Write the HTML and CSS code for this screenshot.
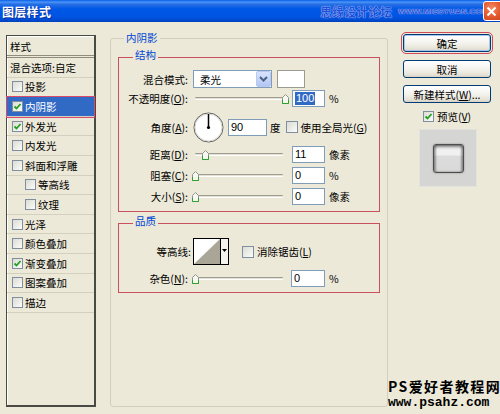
FILE: index.html
```html
<!DOCTYPE html>
<html lang="en">
<head>
<meta charset="utf-8">
<title>图层样式</title>
<link rel="stylesheet" href="styles.css">
</head>
<body>
<div class="titlebar">
  <span class="title">图层样式</span>
  <span class="tb-wm"><span class="wm-cn">思缘设计论坛</span><span class="wm-en">WWW.MISSYUAN.COM</span></span>
  <span class="close"><svg width="11" height="11" viewBox="0 0 11 11"><path d="M1.5 1.5 L9.5 9.5 M9.5 1.5 L1.5 9.5" stroke="#fff" stroke-width="2"/></svg></span>
</div>

<div class="dialog">
  <div class="list">
    <div class="list-head">样式</div>
    <div class="row plain">混合选项:自定</div>
    <div class="row"><span class="cb"></span>投影</div>
    <div class="row selected"><span class="cb"><svg width="9" height="9" viewBox="0 0 9 9"><path d="M1.5 4.5 L3.5 6.5 L7.5 2" stroke="#21a121" stroke-width="1.8" fill="none"/></svg></span>内阴影</div>
    <div class="row"><span class="cb"><svg width="9" height="9" viewBox="0 0 9 9"><path d="M1.5 4.5 L3.5 6.5 L7.5 2" stroke="#21a121" stroke-width="1.8" fill="none"/></svg></span>外发光</div>
    <div class="row"><span class="cb"></span>内发光</div>
    <div class="row"><span class="cb"></span>斜面和浮雕</div>
    <div class="row sub"><span class="cb"></span>等高线</div>
    <div class="row sub"><span class="cb"></span>纹理</div>
    <div class="row"><span class="cb"></span>光泽</div>
    <div class="row"><span class="cb"></span>颜色叠加</div>
    <div class="row"><span class="cb"><svg width="9" height="9" viewBox="0 0 9 9"><path d="M1.5 4.5 L3.5 6.5 L7.5 2" stroke="#21a121" stroke-width="1.8" fill="none"/></svg></span>渐变叠加</div>
    <div class="row"><span class="cb"></span>图案叠加</div>
    <div class="row"><span class="cb"></span>描边</div>
  </div>

  <div class="main">
    <div class="legend">内阴影</div>

    <div class="group struct">
      <div class="legend inner">结构</div>
      <div class="frow r-blend">
        <span class="lbl">混合模式:</span>
        <span class="select"><span class="sel-text">柔光</span><span class="sel-btn"><svg width="9" height="6" viewBox="0 0 9 6"><path d="M1 1 L4.5 4.5 L8 1" stroke="#4d6185" stroke-width="2" fill="none"/></svg></span></span>
        <span class="swatch"></span>
      </div>
      <div class="frow r-op">
        <span class="lbl">不透明度(<u>O</u>):</span>
        <span class="slider"><span class="track"></span><span class="thumb" style="left:89px"><svg width="7" height="10" viewBox="0 0 7 10"><path d="M0.5 3.5 L3.5 0.5 L6.5 3.5 V9.5 H0.5 Z" fill="#f7f7f2" stroke="#8b958b"/><path d="M0.5 6 V9.5 H6.5 V6" stroke="#2ea12e" fill="none"/></svg></span></span>
        <span class="input"><span class="hl">100</span></span>
        <span class="unit">%</span>
      </div>
      <div class="frow r-angle">
        <span class="lbl">角度(<u>A</u>):</span>
        <svg class="dial" width="31" height="31" viewBox="0 0 31 31"><circle cx="15.5" cy="15.5" r="14.5" fill="#fff" stroke="#5a5a5a"/><circle cx="15.5" cy="15.5" r="13.5" fill="none" stroke="#d8d8d0"/><path d="M15.5 15.5 V2" stroke="#000" stroke-width="1.5"/><circle cx="15.5" cy="15.5" r="1.6" fill="#000"/></svg>
        <span class="input ang">90</span>
        <span class="unit deg">度</span>
        <span class="cb gcb"></span>
        <span class="cb-lbl">使用全局光(<u>G</u>)</span>
      </div>
      <div class="frow r-s">
        <span class="lbl">距离(<u>D</u>):</span>
        <span class="slider"><span class="track"></span><span class="thumb" style="left:9px"><svg width="7" height="10" viewBox="0 0 7 10"><path d="M0.5 3.5 L3.5 0.5 L6.5 3.5 V9.5 H0.5 Z" fill="#f7f7f2" stroke="#8b958b"/><path d="M0.5 6 V9.5 H6.5 V6" stroke="#2ea12e" fill="none"/></svg></span></span>
        <span class="input">11</span>
        <span class="unit">像素</span>
      </div>
      <div class="frow r-s">
        <span class="lbl">阻塞(<u>C</u>):</span>
        <span class="slider"><span class="track"></span><span class="thumb" style="left:-1px"><svg width="7" height="10" viewBox="0 0 7 10"><path d="M0.5 3.5 L3.5 0.5 L6.5 3.5 V9.5 H0.5 Z" fill="#f7f7f2" stroke="#8b958b"/><path d="M0.5 6 V9.5 H6.5 V6" stroke="#2ea12e" fill="none"/></svg></span></span>
        <span class="input">0</span>
        <span class="unit">%</span>
      </div>
      <div class="frow r-s">
        <span class="lbl">大小(<u>S</u>):</span>
        <span class="slider"><span class="track"></span><span class="thumb" style="left:-1px"><svg width="7" height="10" viewBox="0 0 7 10"><path d="M0.5 3.5 L3.5 0.5 L6.5 3.5 V9.5 H0.5 Z" fill="#f7f7f2" stroke="#8b958b"/><path d="M0.5 6 V9.5 H6.5 V6" stroke="#2ea12e" fill="none"/></svg></span></span>
        <span class="input">0</span>
        <span class="unit">像素</span>
      </div>
    </div>

    <div class="group quality">
      <div class="legend inner">品质</div>
      <div class="frow r-contour">
        <span class="lbl wide">等高线:</span>
        <svg class="contour" width="36" height="27" viewBox="0 0 36 27"><rect x="0.5" y="0.5" width="35" height="26" fill="#fff" stroke="#000"/><polygon points="1,26 27,1 27,26" fill="#a9a597"/><path d="M27.5 1 V26" stroke="#000"/><rect x="28" y="1" width="7" height="25" fill="#f4f3ee"/><polygon points="29,11 34,11 31.5,14" fill="#000"/></svg>
        <span class="cb acb"></span>
        <span class="cb-lbl">消除锯齿(<u>L</u>)</span>
      </div>
      <div class="frow r-noise">
        <span class="lbl">杂色(<u>N</u>):</span>
        <span class="slider"><span class="track"></span><span class="thumb" style="left:-1px"><svg width="7" height="10" viewBox="0 0 7 10"><path d="M0.5 3.5 L3.5 0.5 L6.5 3.5 V9.5 H0.5 Z" fill="#f7f7f2" stroke="#8b958b"/><path d="M0.5 6 V9.5 H6.5 V6" stroke="#2ea12e" fill="none"/></svg></span></span>
        <span class="input nz">0</span>
        <span class="unit">%</span>
      </div>
    </div>
  </div>

  <div class="side">
    <span class="btn ok">确定</span>
    <span class="btn">取消</span>
    <span class="btn">新建样式(<u>W</u>)...</span>
    <div class="preview-row"><span class="cb"><svg width="9" height="9" viewBox="0 0 9 9"><path d="M1.5 4.5 L3.5 6.5 L7.5 2" stroke="#21a121" stroke-width="1.8" fill="none"/></svg></span><span>预览(<u>V</u>)</span></div>
    <div class="preview"><span class="swatch-preview"></span></div>
  </div>
</div>

<div class="watermark">
  <div class="wm1">PS爱好者教程网</div>
  <div class="wm2">www.psahz.com</div>
</div>
</body>
</html>
```

FILE: styles.css
```css
* { box-sizing: border-box; margin: 0; padding: 0; }
html, body { width: 500px; height: 414px; overflow: hidden; }
body {
  background: #ECE9D8;
  font-family: "Noto Sans CJK SC", "Liberation Sans", sans-serif;
  font-size: 10.5px;
  line-height: 13px;
  color: #000;
  position: relative;
}
u { text-decoration: underline; text-underline-offset: 1px; }

/* title bar */
.titlebar {
  height: 22px;
  display: flex;
  align-items: center;
  padding-left: 2px;
  position: relative;
  background: linear-gradient(to bottom, #0a5fe8 0%, #4a95f8 10%, #2a70e4 18%, #0058e6 40%, #0054e3 75%, #004ad0 92%, #003fb8 100%);
}
.title {
  color: #fff;
  font-weight: bold;
  font-size: 12px;
  letter-spacing: 0.3px;
  text-shadow: 1px 1px 0 #0b2f9e;
}
.tb-wm {
  margin-left: auto;
  margin-right: 11px;
  display: flex;
  align-items: center;
  gap: 6px;
  color: #1f4fd6;
  text-shadow: 0 0 1px #b9d3ff, 0 0 1px #b9d3ff;
}
.wm-cn { font-size: 12px; font-weight: bold; letter-spacing: 0; }
.wm-en { font-family: "Liberation Sans", sans-serif; font-size: 8px; font-weight: bold; letter-spacing: 0.2px; }
.close {
  position: absolute;
  top: 1px;
  right: -4px;
  width: 21px;
  height: 20px;
  border: 1px solid #fff;
  border-radius: 3px;
  background: radial-gradient(circle at 40% 35%, #f28a66 0%, #e2572c 55%, #c8401c 100%);
  display: flex;
  align-items: center;
  justify-content: center;
  padding-right: 4px;
}

/* dialog layout */
.dialog {
  display: flex;
  align-items: flex-start;
  padding: 13px 0 0 6px;
}

/* styles list */
.list {
  width: 90px;
  height: 372px;
  border: 1px solid #4a4a44;
  border-right-width: 2px;
  border-bottom-width: 2px;
  background: #ECE9D8;
  box-shadow: inset 1px 1px 0 #fff;
}
.list-head {
  height: 22px;
  padding: 4px 0 0 3px;
  border-bottom: 3px double #8f8c7e;
}
.row {
  height: 19.6px;
  display: flex;
  align-items: center;
  padding-left: 5px;
  border-bottom: 1px solid #d3d0bf;
  white-space: nowrap;
}
.row.plain { padding-left: 3px; }
.row.sub { padding-left: 18px; }
.row .cb { margin-right: 2px; }
.row.selected {
  background: #316ac5;
  color: #fff;
  outline: 1px solid #d84a6c;
}

.cb {
  width: 11px;
  height: 11px;
  flex: none;
  border: 1px solid #7f8fa0;
  background: linear-gradient(135deg, #dcdcd4, #fbfbf9);
  display: inline-flex;
  align-items: center;
  justify-content: center;
}

/* main group */
.main {
  margin: 3px 0 0 14px;
  width: 278px;
  height: 369px;
  border: 1px solid #d0d0bf;
  border-radius: 3px;
  position: relative;
  padding: 18px 0 0 7px;
}
.legend {
  position: absolute;
  top: -8px;
  left: 13px;
  padding: 0 2px;
  background: #ECE9D8;
  color: #0046d5;
  line-height: 14px;
}
.legend.inner { top: -10px; left: 14px; }

.group {
  width: 262px;
  border: 1px solid #c9505d;
  position: relative;
}
.struct { height: 155px; padding-top: 12px; }
.quality { height: 70px; margin-top: 11px; padding-top: 14px; }

.frow { display: flex; align-items: center; height: 17px; white-space: nowrap; }
.lbl { width: 69px; flex: none; text-align: right; margin-right: 5px; }
.lbl.wide { width: 72px; margin-right: 2px; }

.r-blend { height: 18px; }
.r-op { margin-top: 2px; }
.r-angle { margin-top: 5px; height: 30px; }
.r-s { margin-top: 4px; }
.r-contour { height: 27px; }
.r-noise { margin-top: 5px; }

.select {
  width: 79px;
  height: 18px;
  border: 1px solid #7f9db9;
  background: #fff;
  display: flex;
  align-items: center;
  padding-left: 6px;
}
.sel-btn {
  margin-left: auto;
  width: 15px;
  height: 16px;
  border: 1px solid #b9c9f2;
  border-radius: 2px;
  background: linear-gradient(to bottom, #d8e3fc, #b3c7f5);
  display: flex;
  align-items: center;
  justify-content: center;
}
.swatch {
  margin-left: 5px;
  width: 28px;
  height: 18px;
  border: 1px solid #9c9a90;
  background: #fff;
}

.slider { position: relative; width: 96px; height: 17px; flex: none; }
.track {
  position: absolute;
  left: 2px;
  top: 7px;
  width: 88px;
  height: 3px;
  border-top: 1px solid #9f9d92;
  border-bottom: 1px solid #fff;
  background: #e3e1d4;
  border-radius: 1px;
}
.thumb { position: absolute; top: 4px; width: 7px; height: 10px; display: block; line-height: 0; }

.input {
  margin-left: 3px;
  width: 33px;
  height: 17px;
  border: 1px solid #7f9db9;
  background: #fff;
  padding-left: 2px;
  display: flex;
  align-items: center;
  font-family: "Liberation Sans", "Noto Sans CJK SC", sans-serif;
  font-size: 11px;
}
.input.ang { margin-left: 4px; width: 39px; }
.input.nz { margin-left: 2px; width: 34px; }
.hl { background: #316ac5; color: #fff; padding: 0 1px; line-height: 13px; }
.unit { margin-left: 4px; }
.unit.deg { margin-left: 3px; }
.dial { flex: none; display: block; }
.gcb { margin-left: 5px; width: 12px; height: 12px; }
.acb { margin-left: 13px; width: 12px; height: 12px; }
.cb-lbl { margin-left: 3px; }
.contour { flex: none; display: block; }

/* right column */
.side {
  margin: -1px 0 0 15px;
  width: 88px;
  display: flex;
  flex-direction: column;
  align-items: flex-start;
}
.btn {
  width: 88px;
  height: 18px;
  border: 1px solid #003c74;
  border-radius: 3px;
  background: linear-gradient(to bottom, #ffffff 0%, #f4f3ee 50%, #e6e3d6 85%, #d6d0c5 100%);
  display: flex;
  align-items: center;
  justify-content: center;
  white-space: nowrap;
  margin-bottom: 8px;
}
.btn.ok { outline: 1px solid #d04a5a; outline-offset: 1px; box-shadow: inset 0 0 0 1px #a8c4f0; }
.btn:nth-child(2) { margin-bottom: 7px; }
.preview-row {
  margin: -2px 0 0 20px;
  height: 14px;
  display: flex;
  align-items: center;
  gap: 3px;
}
.preview {
  margin: 6px 0 0 16px;
  width: 58px;
  height: 58px;
  background: #d5d5d3;
  border: 1px solid #e2e2de;
  display: flex;
  align-items: center;
  justify-content: center;
}
.swatch-preview {
  width: 31px;
  height: 29px;
  border: 1px solid #4d4d4d;
  border-radius: 3px;
  background: linear-gradient(to bottom, #f2f2f2 0%, #f0f0f0 38%, #dcdcdc 40%, #d9d9d9 100%);
  box-shadow: inset 0 2px 3px rgba(0,0,0,0.45), inset 2px 0 2px rgba(0,0,0,0.25), inset -2px 0 2px rgba(0,0,0,0.25), 0 0 2px rgba(0,0,0,0.35);
}

/* corner watermark */
.watermark {
  position: absolute;
  left: 388px;
  top: 379px;
  color: #000;
  font-weight: bold;
}
.wm1 { font-size: 14px; line-height: 15px; letter-spacing: 1.4px; white-space: nowrap; }
.wm2 { margin-top: 3px; font-family: "Liberation Mono", monospace; font-size: 13px; line-height: 12px; white-space: nowrap; }
```
